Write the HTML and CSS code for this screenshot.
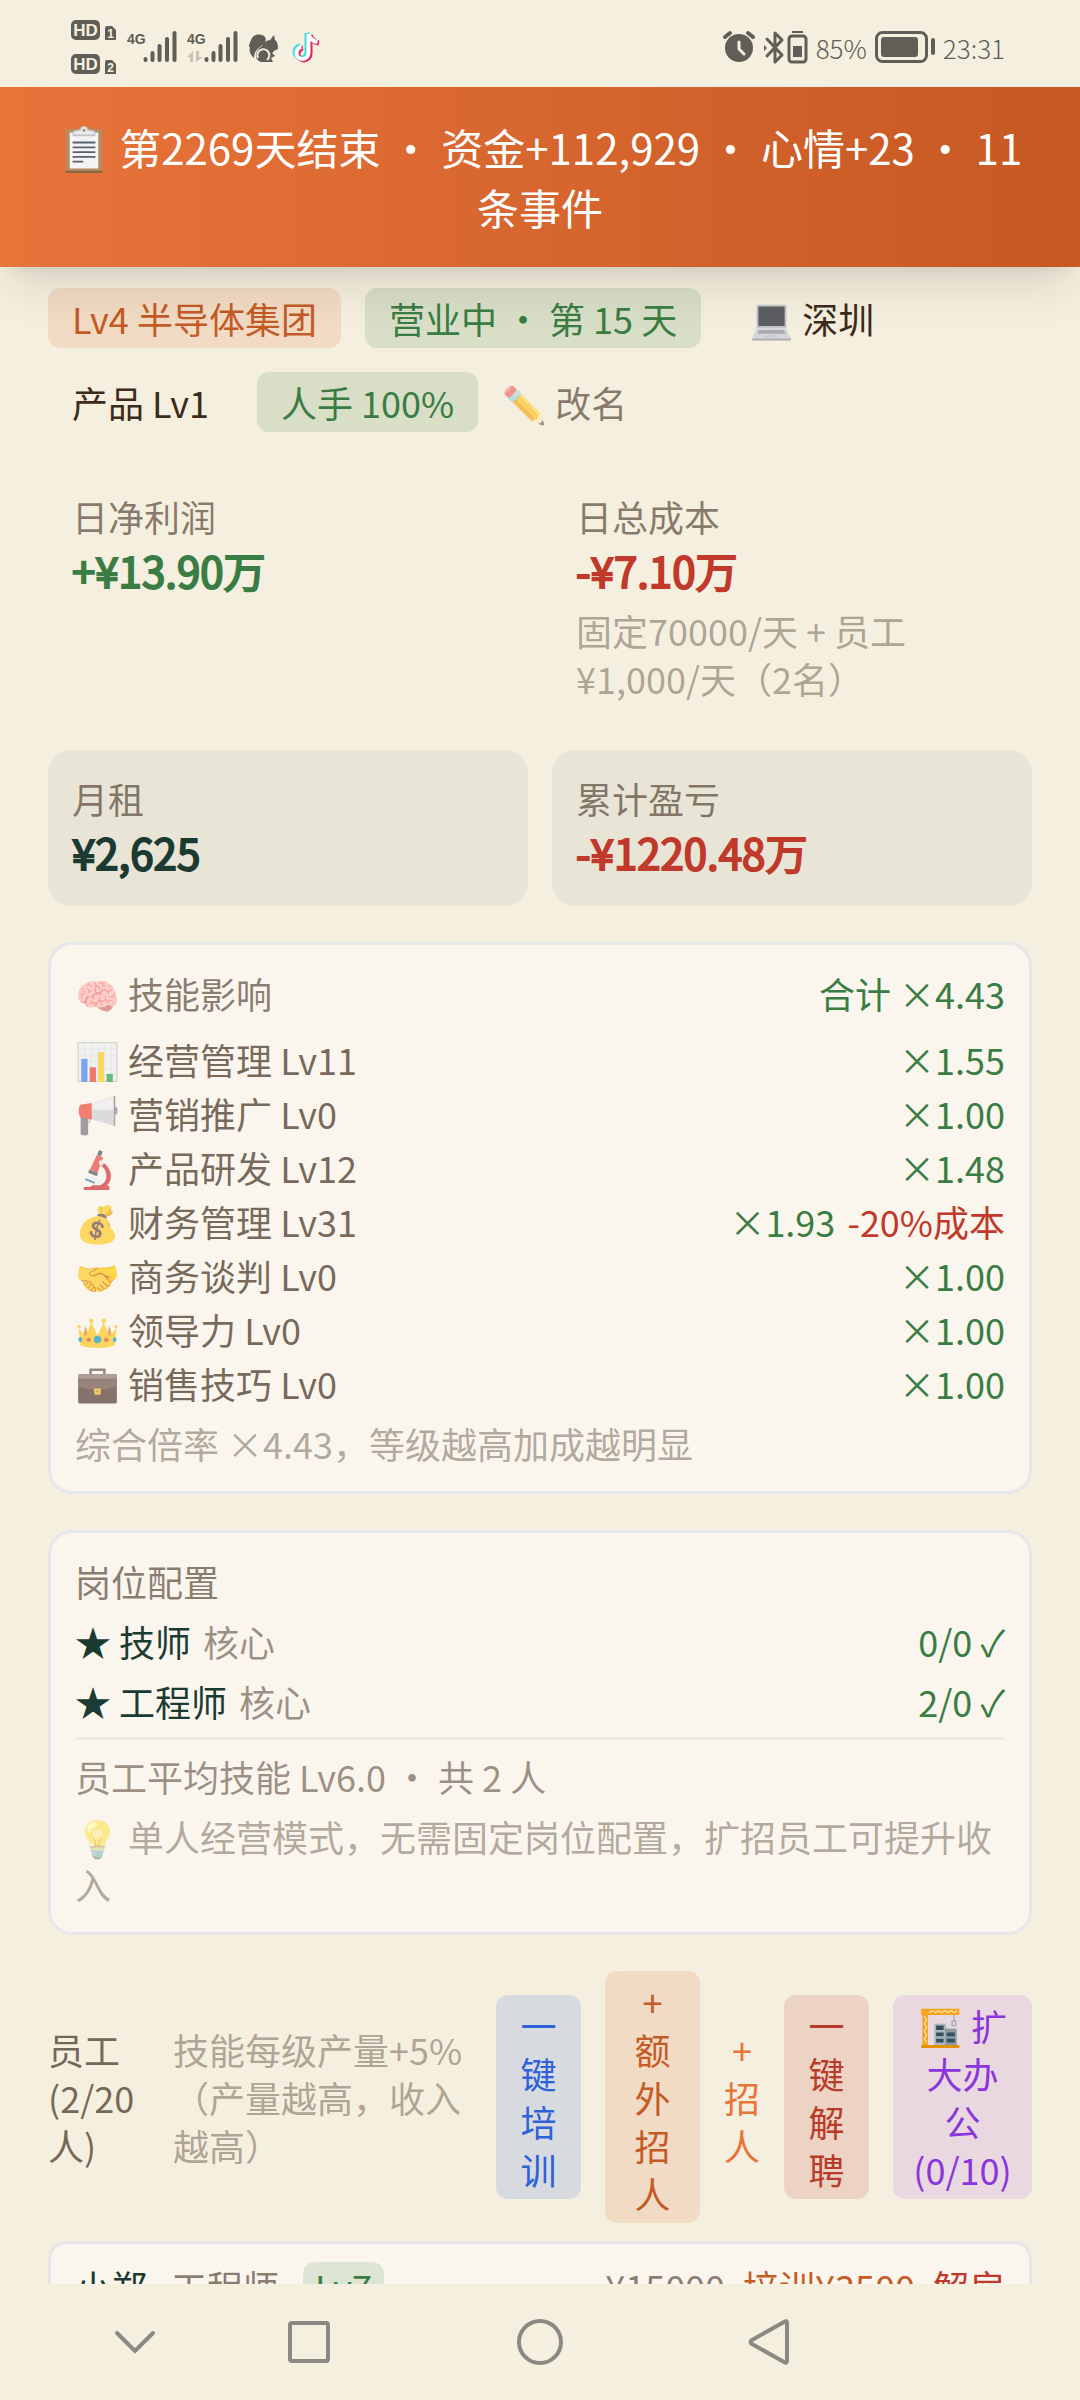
FILE: index.html
```
<!DOCTYPE html>
<html lang="zh-CN">
<head>
<meta charset="utf-8">
<meta name="viewport" content="width=device-width, initial-scale=1">
<title>半导体集团</title>
<link rel="stylesheet" href="styles.css">
</head>
<body>
<div class="statusbar">
  <div class="status-group">
    <svg width="46" height="64" viewBox="71 16 46 64" aria-hidden="true">
      <g class="ink"><rect x="71" y="20" width="29" height="20" rx="5"/><rect x="71" y="54" width="29" height="20" rx="5"/>
      <path d="M105 28q0-2 2-2h5l4 4v10h-11zM105 62q0-2 2-2h5l4 4v10h-11z"/></g>
      <g class="cut"><text x="85.500" y="36" font-size="17">HD</text><text x="85.500" y="70" font-size="17">HD</text><text x="110.500" y="38" font-size="12">1</text><text x="110.500" y="72" font-size="12">2</text></g>
    </svg>
    <svg width="50" height="64" viewBox="127 16 50 64" aria-hidden="true">
      <text class="net" x="127" y="44">4G</text>
      <path class="bars" d="M145.500 59v1M152.500 53v7M159.500 46v14M167 39v21M174.500 33v27"/>
    </svg>
    <svg width="52" height="64" viewBox="187 16 52 64" aria-hidden="true">
      <text class="net" x="187" y="44">4G</text>
      <path fill="#c9c4b6" d="M187 57l6-6v11h-3v-5zM196 51h3v6h4l-7 5z"/>
      <path class="bars" d="M206.500 59v1M213.500 53v7M220.500 46v14M228 39v21M235.500 33v27"/>
    </svg>
    <svg width="32" height="64" viewBox="249 16 32 64" aria-hidden="true">
      <path class="ink" d="M251 40c2-6 10-7 14-3 2 3 0 6-4 9-4 3-7 6-7 12-4-3-5-7-4-11l-1 0c0-3 1-4 2-7zM262 46c2-4 5-6 8-6l4-5 1 5c3 2 3 6 3 9l-4 2q-1 3 1 5l-4 2 2 4h-12c-7-2-7-11 1-16z"/>
      <path fill="none" stroke="#f5efdf" stroke-width="2" d="M258 58a6 6 0 1 1 9 2"/><circle cx="274" cy="53" r="1.500" fill="#f5efdf"/>
    </svg>
    <svg width="30" height="64" viewBox="291 16 30 64" aria-hidden="true">
      <g fill="none" stroke-width="5"><path stroke="#3fe0d8" d="M307 33v19a6 6 0 1 1-7-6M307 33q2 7 9 8"/><path stroke="#e0245e" d="M310 35v19a6 6 0 1 1-7-6M310 35q2 7 9 8"/><path stroke="#fff" d="M308.500 34v19a6 6 0 1 1-7-6M308.500 34q2 7 9 8" stroke-width="4"/></g>
    </svg>
  </div>
  <div class="status-group status-right">
    <svg width="34" height="64" viewBox="718 16 34 64" aria-hidden="true">
      <circle class="ink" cx="735" cy="48" r="14"/><path fill="none" stroke="#605e56" stroke-width="4" stroke-linecap="round" d="M721 37l5-4M749 37l-5-4"/><path fill="none" stroke="#f5efdf" stroke-width="3" stroke-linecap="round" d="M735 42v7l5 5"/>
    </svg>
    <svg width="44" height="64" viewBox="762 16 44 64" aria-hidden="true">
      <path class="line" d="M765 39l15 16-7 7V33l7 7-15 16"/><path class="ink" d="M762 45l3 3-3 3zM790 31h11v2h-11zM791 46h9v11h-9z"/><rect class="line" x="787" y="36" width="17" height="26" rx="3"/>
    </svg>
    <span class="status-text">85%</span>
    <svg width="60" height="64" viewBox="872 16 60 64" aria-hidden="true">
      <rect class="line" x="873.500" y="32.500" width="50" height="29" rx="6"/><rect class="ink" x="878" y="37" width="37" height="20" rx="3"/><rect class="ink" x="928" y="38" width="4" height="17" rx="2"/>
    </svg>
    <time class="status-text">23:31</time>
  </div>
</div>

<header class="banner">
  <svg class="emoji-lg" viewBox="0 0 128 128" role="img" aria-label="剪贴板"><rect x="14" y="8" width="100" height="120" rx="4" fill="#b58b62"/><path fill="#8c6743" d="M14 122h100v6H14z"/><path fill="#f3f3f4" d="M25 18h78v98H25z"/><path fill="#bfc3c8" d="M33 28V18q0-6 9-7l11-2q2-9 11-9t11 9l11 2q9 1 9 7v10z"/><path fill="#e9ebed" d="M36 23v-5q1-3 8-4l12-2q1-9 8-9t8 9l12 2q7 1 8 4v5z"/><circle cx="64" cy="12" r="4" fill="#b58b62"/><path stroke="#59616d" stroke-width="5" d="M33 45h62M33 58h62M33 71h62M33 84h62M33 97h29"/></svg>
  第2269天结束 · 资金+112,929 · 心情+23 · 11 条事件
</header>

<main class="content">
  <section class="tags">
    <span class="tag tag-orange">Lv4 半导体集团</span>
    <span class="tag tag-green">营业中 · 第 15 天</span>
    <span class="tag"><svg class="emoji" viewBox="0 0 128 128" role="img" aria-label="电脑"><rect x="16" y="12" width="96" height="76" rx="5" fill="#c3c5c8"/><path fill="#5d5e61" d="M22 18h84v62H22z"/><path fill="#d6d7da" d="M16 88h96l14 32H2z"/><path fill="#a9abb0" d="M2 120h124v6H2zM24 93h80l6 12H18z"/><path fill="#c7c9cc" d="M46 109h36l3 8H43z"/></svg> 深圳</span>
    <span class="tag">产品 Lv1</span>
    <span class="tag tag-green">人手 100%</span>
    <button class="link muted" type="button">✏️ 改名</button>
  </section>

  <section class="stats">
    <div class="stat"><div class="muted">日净利润</div><div class="value green">+¥13.90万</div></div>
    <div class="stat"><div class="muted">日总成本</div><div class="value red">-¥7.10万</div><div class="faint stat-note">固定70000/天 + 员工¥1,000/天（2名）</div></div>
    <div class="stat stat-filled"><div class="muted">月租</div><div class="value dark">¥2,625</div></div>
    <div class="stat stat-filled"><div class="muted">累计盈亏</div><div class="value red">-¥1220.48万</div></div>
  </section>

  <section class="card">
    <div class="row card-head"><span class="muted">🧠 技能影响</span><span class="green">合计 ×4.43</span></div>
    <ul class="skills">
      <li class="row"><span><svg class="emoji" viewBox="0 0 128 128" role="img" aria-label="图表"><path fill="#eef0f1" stroke="#b4b7bb" stroke-width="3" d="M2 2h124v124H2z"/><path stroke="#d3d7da" stroke-width="2" d="M2 23h124M2 44h124M2 65h124M2 86h124M2 107h124M23 2v124M44 2v124M65 2v124M86 2v124M107 2v124"/><path fill="#4285f4" d="M12 54h20v74H12z"/><path fill="#ea4335" d="M39 81h20v47H39z"/><path fill="#f9cd24" d="M66 32h19v96H66z"/><path fill="#2ba24c" d="M93 102h20v26H93z"/></svg> 经营管理 Lv11</span><span class="green">×1.55</span></li>
      <li class="row"><span><svg class="emoji" viewBox="0 0 128 128" role="img" aria-label="喇叭"><path fill="#77797c" d="M10 68h24v54q-12 8-24 0z"/><path fill="none" stroke="#a9abad" stroke-width="4" d="M38 72q6 8-4 14"/><path fill="#ef4b3e" d="M8 28l38-6v54L8 68q-8-20 0-40z"/><path fill="#cfd1d4" d="M46 22L120 0v96L46 74z"/><path fill="#eeeeef" d="M46 22L116 4v40H46z"/><path fill="#85888c" d="M116 0h5v96h-5zM121 34q7 0 7 13t-7 13z"/></svg> 营销推广 Lv0</span><span class="green">×1.00</span></li>
      <li class="row"><span><svg class="emoji" viewBox="0 0 128 128" role="img" aria-label="显微镜"><path fill="#d32f3a" d="M20 118h20l8-5h26q22-12 18-36-2-18-20-30l6-10q30 20 29 48-1 18-13 29h8v14H20z"/><path fill="#e5473f" d="M62 16l20 8-18 48-24-10z"/><path fill="#53575e" d="M69 0l12 5-6 16-12-5zM38 62l28 11-4 11-28-11z"/><circle cx="76" cy="41" r="8" fill="#f4e3df"/><path fill="#e5f3f8" d="M24 74l54 24-2 10-56-22z"/><path fill="#347c9b" d="M26 90l30 12-2 6-30-12z"/></svg> 产品研发 Lv12</span><span class="green">×1.48</span></li>
      <li class="row"><span>💰 财务管理 Lv31</span><span class="green">×1.93 <span class="red bonus">-20%成本</span></span></li>
      <li class="row"><span>🤝 商务谈判 Lv0</span><span class="green">×1.00</span></li>
      <li class="row"><span><svg class="emoji" viewBox="0 0 128 128" role="img" aria-label="皇冠"><path fill="#d9902a" d="M10 98L26 44l12 40 10-42 16 40 16-40 10 42 12-40 16 54z"/><path fill="#fdc81f" d="M10 108L3 50l24 30L44 32l20 44 20-44 17 48 24-30-7 58q-54 14-108 0z"/><circle cx="44" cy="28" r="7" fill="#fdc81f"/><circle cx="84" cy="28" r="7" fill="#fdc81f"/><circle cx="5" cy="46" r="5" fill="#f5c426"/><circle cx="123" cy="46" r="5" fill="#f5c426"/><circle cx="64" cy="88" r="12" fill="#1898c4"/><circle cx="36" cy="89" r="7" fill="#e54a3c"/><circle cx="92" cy="89" r="7" fill="#e54a3c"/><ellipse cx="9" cy="88" rx="6" ry="8" fill="#1898c4"/><ellipse cx="119" cy="88" rx="6" ry="8" fill="#1898c4"/></svg> 领导力 Lv0</span><span class="green">×1.00</span></li>
      <li class="row"><span><svg class="emoji" viewBox="0 0 128 128" role="img" aria-label="公文包"><path fill="none" stroke="#6b5a54" stroke-width="8" d="M42 26V12h44v14"/><rect x="2" y="26" width="124" height="94" rx="6" fill="#553b33"/><path fill="#6f554c" d="M8 26h112q6 0 6 6v34q-62 18-124 0V32q0-6 6-6z"/><path fill="#937d75" d="M8 26h112q6 0 6 6v8H2v-8q0-6 6-6z"/><path fill="#f2b92d" d="M52 72h24l-3 20H55z"/><path fill="#cf8d18" d="M58 78h12v6H58z"/></svg> 销售技巧 Lv0</span><span class="green">×1.00</span></li>
    </ul>
    <p class="faint gap-top">综合倍率 ×4.43，等级越高加成越明显</p>
  </section>

  <section class="card">
    <div class="muted">岗位配置</div>
    <div class="row gap-top"><span class="dark">★ 技师<span class="soft core">核心</span></span><span class="green">0/0 ✓</span></div>
    <div class="row gap-top"><span class="dark">★ 工程师<span class="soft core">核心</span></span><span class="green">2/0 ✓</span></div>
    <p class="soft summary">员工平均技能 Lv6.0 · 共 2 人</p>
    <p class="faint gap-top">💡 单人经营模式，无需固定岗位配置，扩招员工可提升收入</p>
  </section>

  <section class="staff">
    <h2 class="staff-title">员工 (2/20人)</h2>
    <p class="faint staff-note">技能每级产量+5%（产量越高，收入越高）</p>
    <button class="act act-blue" type="button">一键培训</button>
    <button class="act act-orange" type="button">+ 额外招人</button>
    <button class="act act-plain" type="button">+ 招人</button>
    <button class="act act-red" type="button">一键解聘</button>
    <button class="act act-purple" type="button"><svg class="emoji" viewBox="0 0 128 128" role="img" aria-label="施工"><rect x="44" y="50" width="38" height="72" fill="#a9b7bf"/><path fill="#8d9ba3" d="M78 66h38v56H78z"/><path fill="#34505c" d="M50 56h24v14H50zM50 78h24v12H50zM84 78h26v12H84zM50 98h24v12H50zM84 98h26v12H84z"/><path fill="#f3a51d" d="M2 2h122v20H24v98H6V22H2z"/><path fill="none" stroke="#fce3ab" stroke-width="4" d="M28 15l10-7 10 7 10-7 10 7 10-7 10 7 10-7 10 7 10-7M12 26l8 12-8 12 8 12-8 12 8 12-8 12 8 12"/><path fill="none" stroke="#9eabb2" stroke-width="4" d="M107 22v18M101 42h12v14h-12z"/><path fill="#e3920c" d="M2 118h122v10H2z"/></svg> 扩大办公 (0/10)</button>
  </section>

  <section class="card member">
    <span class="dark">小郑</span><span class="muted">工程师</span><span class="level">Lv7</span>
    <span class="member-actions"><span class="muted">¥15000</span><button class="link brand" type="button">培训¥3500</button><button class="link red" type="button">解雇</button></span>
  </section>
</main>

<nav class="navbar">
  <button type="button" aria-label="收起"><svg width="48" height="48" viewBox="0 0 48 48"><path d="M6 15l18 18 18-18"/></svg></button>
  <button type="button" aria-label="最近任务"><svg width="48" height="48" viewBox="0 0 48 48"><rect x="5" y="5" width="38" height="38" rx="2"/></svg></button>
  <button type="button" aria-label="主页"><svg width="48" height="48" viewBox="0 0 48 48"><circle cx="24" cy="24" r="21"/></svg></button>
  <button type="button" aria-label="返回"><svg width="48" height="48" viewBox="0 0 48 48"><path d="M41 5v38q0 3-3 1L6 26q-3-2 0-4L38 4q3-2 3 1z"/></svg></button>
</nav>
</body>
</html>
```
FILE: styles.css
```
* { box-sizing: border-box; }

body {
  margin: 0;
  height: 100vh;
  display: flex;
  flex-direction: column;
  background: #f5efdf;
  color: #3d2b1a;
  font-family: "Noto Sans CJK SC", sans-serif;
  font-size: 36px;
  line-height: 48px;
}

p, h2, ul { margin: 0; padding: 0; font: inherit; list-style: none; }
button { margin: 0; padding: 0; border: 0; background: none; font: inherit; color: inherit; cursor: pointer; }

/* Text colours */
.muted { color: rgba(61, 43, 26, .6); }
.soft { color: rgba(61, 43, 26, .5); }
.faint { color: rgba(61, 43, 26, .4); }
.green { color: #3a7d44; }
.red { color: #c0392b; }
.brand { color: #c45a24; }
.dark { color: #1a3a32; }

.emoji { width: 45px; height: 40px; vertical-align: -7px; }
.emoji-lg { width: 52px; height: 47px; vertical-align: -8px; }

/* Phone status bar */
.statusbar {
  flex: none;
  display: flex;
  justify-content: space-between;
  align-items: center;
  height: 87px;
  padding: 9px 75px 0 71px;
}
.status-group { display: flex; align-items: center; gap: 10px; }
.status-right { gap: 8px; }
.status-text { color: #605e56; font-size: 26px; font-weight: 300; }
.ink { fill: #605e56; }
.cut { fill: #f5efdf; font-family: "Liberation Sans", sans-serif; font-weight: 700; text-anchor: middle; }
.net { fill: #605e56; font: 700 14px "Liberation Sans", sans-serif; }
.bars { fill: none; stroke: #605e56; stroke-width: 4; stroke-linecap: round; }
.line { fill: none; stroke: #605e56; stroke-width: 3; stroke-linejoin: round; stroke-linecap: round; }

.banner {
  flex: none;
  position: relative;
  z-index: 1;
  padding: 30px 48px;
  background: linear-gradient(90deg, #e8743a, #c65823);
  box-shadow: 0 30px 45px -9px rgba(0, 0, 0, .1), 0 12px 18px -12px rgba(0, 0, 0, .1);
  color: #fff;
  font-size: 42px;
  line-height: 60px;
  text-align: center;
}

.content {
  flex: 1;
  min-height: 0;
  overflow: hidden auto;
  scrollbar-width: none;
  padding: 21px 48px;
}

.tags { display: flex; flex-wrap: wrap; align-items: center; gap: 24px; }
.tag { padding: 6px 24px; border-radius: 12px; }
.tag-orange { background: rgba(232, 116, 58, .16); color: #c45a24; }
.tag-green { background: rgba(58, 125, 68, .15); color: #3a7d44; }

.stats { display: grid; grid-template-columns: 1fr 1fr; gap: 24px; margin-top: 36px; }
.stat { padding: 24px; border-radius: 24px; }
.stat-filled { background: rgba(26, 58, 50, .05); }
.stat-note { margin-top: 6px; }
.value { font-size: 42px; line-height: 60px; -webkit-text-stroke: 2px currentColor; }

.card {
  margin-top: 36px;
  padding: 24px;
  border: 3px solid #e5e7eb;
  border-radius: 24px;
  background: #faf6ed;
}
.row { display: flex; justify-content: space-between; }
.card-head { margin-bottom: 18px; }
.skills { display: grid; gap: 6px; color: rgba(61, 43, 26, .7); }
.skills .emoji { opacity: .7; }
.bonus { margin-left: 4px; }
.core { margin-left: 12px; }
.gap-top { margin-top: 12px; }
.summary { margin-top: 12px; padding-top: 12px; border-top: 3px solid #eceae6; }

.staff { display: flex; align-items: center; gap: 24px; margin-top: 36px; }
.staff-title { flex: none; width: 101px; color: rgba(61, 43, 26, .7); }
.staff-note { flex: 1; }
.act { flex: none; padding: 6px 24px; border-radius: 12px; text-align: center; }
.act-blue { width: 85px; background: rgba(37, 99, 235, .14); color: #2f62d9; }
.act-orange { width: 95px; background: rgba(232, 116, 58, .16); color: #c45a24; }
.act-plain { width: 36px; padding: 0; color: #e8743a; }
.act-red { width: 85px; background: rgba(192, 57, 43, .15); color: #b83c2c; }
.act-purple { width: 139px; padding: 6px 18px; background: rgba(147, 51, 234, .12); color: #8b35dd; }

.member { display: flex; align-items: center; gap: 24px; margin-top: 18px; padding: 18px 24px; border-radius: 18px; }
.level { padding: 0 12px; border-radius: 12px; background: rgba(58, 125, 68, .15); color: #3a7d44; }
.member-actions { display: flex; gap: 18px; margin-left: auto; }

.navbar {
  flex: none;
  display: grid;
  grid-template-columns: 174fr 174fr 288fr 172fr;
  align-items: center;
  height: 116px;
  padding: 0 224px 0 48px;
}
.navbar button { display: flex; justify-content: center; }
.navbar svg { fill: none; stroke: #8b8983; stroke-width: 4; stroke-linecap: round; }
```
